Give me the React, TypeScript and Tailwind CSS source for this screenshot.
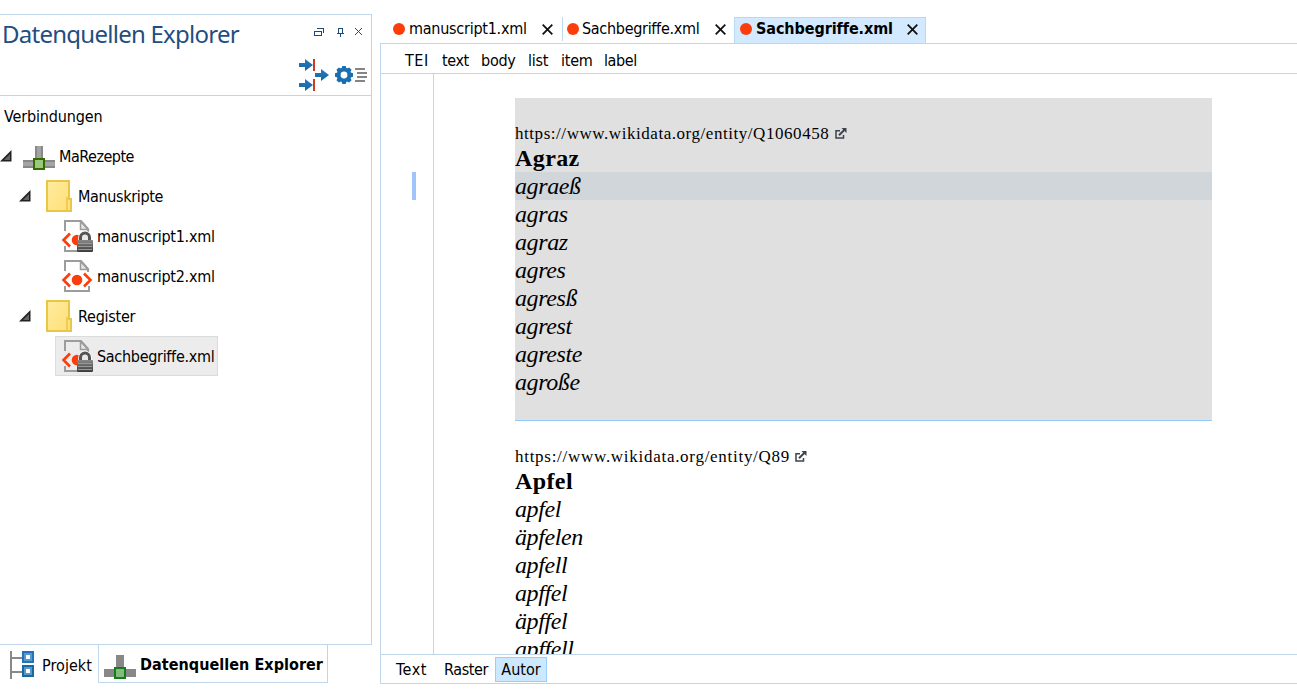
import type { ReactNode } from "react";

function Dot() {
  return <span className="block size-3 shrink-0 rounded-full bg-[#fb3d0c]" />;
}

function Close() {
  return (
    <svg className="block shrink-0" width="11" height="11" viewBox="0 0 11 11" fill="none" stroke="#111" strokeWidth="1.8">
      <path d="M.7.7l9.600 9.600M10.300.7L.7 10.300" />
    </svg>
  );
}

function Expanded() {
  return (
    <svg className="block shrink-0" width="12" height="12" viewBox="0 0 12 12">
      <path d="M11.500 0v11.500H0z" fill="#222" />
      <path d="M10 4v6H4z" fill="#666" />
    </svg>
  );
}

function Connection({ bright = false }: { bright?: boolean }) {
  return (
    <svg className="block shrink-0" width="32" height="24" viewBox="0 0 32 24" shapeRendering="crispEdges">
      <path d="M12 0h8v14h12v8H0v-8h12z" fill="#888" />
      {!bright && <path d="M14 0h4v14h-4zM0 16h32v4H0z" fill="#a4a4a4" />}
      <rect x="11" y="13" width="10" height="10" fill={bright ? "#83bd7e" : "#9cc77d"} stroke={bright ? "#177a1c" : "#336b00"} strokeWidth="2" />
    </svg>
  );
}

function Folder() {
  return (
    <svg className="block shrink-0" width="26" height="32" viewBox="0 0 26 32">
      <defs>
        <linearGradient id="folder" x1="0" y1="0" x2="1" y2="1">
          <stop stopColor="#ffeca0" />
          <stop offset="1" stopColor="#ffdf75" />
        </linearGradient>
      </defs>
      <path d="M1 1h22v18h2v12H1z" fill="url(#folder)" stroke="#e8c648" strokeWidth="2" />
      <path d="M23 18h-2v12" fill="none" stroke="#e8c648" strokeWidth="1.5" />
    </svg>
  );
}

function XmlFile({ locked = false }: { locked?: boolean }) {
  return (
    <svg className="block shrink-0" width="32" height="32" viewBox="0 0 32 32">
      <defs>
        <linearGradient id="lock" x1="0" y1="0" x2="0" y2="1">
          <stop stopColor="#888" />
          <stop offset="1" stopColor="#3c3c3c" />
        </linearGradient>
      </defs>
      <path d="M4 11V1h16l7 8v3M4 26v5h24v-5" fill="none" stroke="#9c9c9c" strokeWidth="2" />
      <path d="M19.500 1.500v8h7.500z" fill="#e6e6e6" stroke="#9c9c9c" strokeWidth="1.500" />
      <path d="M9 13.500L2.500 20 9 26.500" fill="none" stroke="#fb3d0c" strokeWidth="2.600" />
      <circle cx="16" cy="20" r="5.300" fill="#fb3d0c" />
      {locked ? (
        <g>
          <path d="M19.500 21v-3.500a4.500 4.500 0 0 1 9 0V21" fill="#e8e8e8" stroke="#fff" strokeWidth="4.500" />
          <path d="M19.500 21v-3.500a4.500 4.500 0 0 1 9 0V21" fill="#e8e8e8" stroke="#555" strokeWidth="3" />
          <rect x="16" y="20" width="16" height="12" rx="1" fill="url(#lock)" />
          <path d="M17 23.500h14M17 26.500h14M17 29.500h14" stroke="#999" strokeWidth="1" />
        </g>
      ) : (
        <path d="M23 13.500l6.500 6.500-6.500 6.500" fill="none" stroke="#fb3d0c" strokeWidth="2.600" />
      )}
    </svg>
  );
}

function Toolbar() {
  const teeth = [0, 45, 90, 135, 180, 225, 270, 315];
  return (
    <svg className="block shrink-0" width="70" height="34" viewBox="0 0 70 34">
      <defs>
        <linearGradient id="blue" x1="0" y1="0" x2="0" y2="1">
          <stop stopColor="#2876c8" />
          <stop offset="1" stopColor="#146a98" />
        </linearGradient>
      </defs>
      <g fill="url(#blue)">
        <path d="M0 5h6V1l8 6-8 6V9H0z" />
        <path d="M16 15h6v-4l8 6-8 6v-4h-6z" />
        <path d="M0 25h6v-4l8 6-8 6v-4H0z" />
      </g>
      <path d="M14 1h2v12h-2zM14 21h2v12h-2z" fill="#cf3a22" />
      <g fill="#1b6fb0">
        {teeth.map((a) => (
          <path key={a} d="M43.300 8h3.400l1.300 4h-6z" transform={`rotate(${a} 45 17)`} />
        ))}
      </g>
      <circle cx="45" cy="17" r="5.300" fill="none" stroke="#1b6fb0" strokeWidth="3.800" />
      <path d="M56 10h10v2H56zM58 14h10v2H58zM58 18h10v2H58zM56 22h10v2H56z" fill="#858585" shapeRendering="crispEdges" />
    </svg>
  );
}

function WindowButtons() {
  return (
    <svg className="block shrink-0" width="50" height="12" viewBox="0 0 50 12" fill="none" stroke="#1f4a78">
      <path d="M1.500 4.500h7v4h-7zM4 1.500h6.500v4" shapeRendering="crispEdges" />
      <path d="M25.500 6V1.500h4V6M24 6.500h7M27.500 7v3" shapeRendering="crispEdges" />
      <path d="M42 1l7 7M49 1l-7 7" />
    </svg>
  );
}

function ProjectIcon() {
  return (
    <svg className="block shrink-0" width="24" height="28" viewBox="0 0 24 28" shapeRendering="crispEdges">
      <path d="M0 0h2v28H0zM2 6h10v2H2zM2 20h10v2H2z" fill="#888" />
      <path d="M12 0h12v12H12z" fill="#2272bd" />
      <path d="M12 14h12v12H12z" fill="#176aa0" />
      <path d="M14 2h8v8h-8zM14 16h8v8h-8z" fill="#589bcb" />
      <path d="M16 4h4v4h-4zM16 18h4v4h-4z" fill="#fff" />
    </svg>
  );
}

function External() {
  return (
    <svg className="ml-[6px] mt-[2px] block shrink-0" width="12" height="11" viewBox="0 0 12 11" fill="none" stroke="#3d434c">
      <path d="M5 2.700H1v7.300h7.500V7" strokeWidth="1.500" />
      <path d="M4 7.200l5.500-5.500" strokeWidth="2" />
      <path d="M6.500 0H11.500v5z" fill="#3d434c" stroke="none" />
    </svg>
  );
}

function TreeRow({ indent, children }: { indent: string; children: ReactNode }) {
  return <div className={`flex h-10 items-center ${indent}`}>{children}</div>;
}

function Entry({ url, title, forms, active = false, urlWidth }: { url: string; title: string; forms: string[]; active?: boolean; urlWidth: string }) {
  return (
    <section className={active ? "h-[323px] border-b border-[#99c9f9] bg-[#e0e0e0] pt-[22px]" : "pt-[22px]"}>
      <div className="flex h-6 items-center whitespace-nowrap">
        <span className={`pt-[3px] text-[17px] ${urlWidth}`}>{url}</span>
        <External />
      </div>
      <h2 className="h-7 whitespace-nowrap text-[24px] font-bold leading-7 tracking-[0.4px]">{title}</h2>
      {forms.map((form, i) => (
        <div key={form} className={`h-7 whitespace-nowrap text-[24px] italic leading-7 tracking-[-0.4px] ${active && i === 0 ? "bg-[#d0d6da]" : ""}`}>
          {form}
        </div>
      ))}
    </section>
  );
}

export default function App() {
  return (
    <div className="flex h-[691px] w-[1297px] overflow-hidden bg-white font-['DejaVu_Sans_Condensed','DejaVu_Sans',sans-serif] text-[16px] leading-5 tracking-[-0.25px] text-black [font-stretch:condensed]">
      <aside className="flex w-[372px] shrink-0 flex-col pt-[14px]">
        <div className="flex h-[631px] flex-col border-y border-r border-[#c0d6eb]">
          <header className="flex h-[81px] shrink-0 flex-col border-b border-[#c0d6eb]">
            <div className="flex h-10 justify-between pl-[2px] pr-2">
              <h1 className="whitespace-nowrap font-['Noto_Sans',sans-serif] text-[24px] leading-[37px] tracking-[-0.74px] text-[#1f4e82]">Datenquellen Explorer</h1>
              <div className="pt-[12px]"><WindowButtons /></div>
            </div>
            <div className="flex justify-end pr-[2px] pt-[3px]"><Toolbar /></div>
          </header>
          <div className="flex h-10 items-center pl-1 pt-[2px] tracking-[-0.15px]">Verbindungen</div>
          <TreeRow indent="pl-0">
            <Expanded />
            <div className="ml-[11px] mt-1"><Connection /></div>
            <span className="ml-[4px] pt-[2px] tracking-[-0.5px]">MaRezepte</span>
          </TreeRow>
          <TreeRow indent="pl-[19px]">
            <Expanded />
            <div className="ml-[15px]"><Folder /></div>
            <span className="ml-[6px] pt-[2px] tracking-[-0.35px]">Manuskripte</span>
          </TreeRow>
          <TreeRow indent="pl-[61px]"><XmlFile locked /><span className="ml-1 pt-[2px]">manuscript1.xml</span></TreeRow>
          <TreeRow indent="pl-[61px]"><XmlFile /><span className="ml-1 pt-[2px]">manuscript2.xml</span></TreeRow>
          <TreeRow indent="pl-[19px]">
            <Expanded />
            <div className="ml-[15px]"><Folder /></div>
            <span className="ml-[6px] pt-[2px]">Register</span>
          </TreeRow>
          <div className="ml-[55px] flex h-10 w-[163px] items-center border border-[#dcdcdc] bg-[#ececec] pl-[5px]">
            <XmlFile locked />
            <span className="ml-1 whitespace-nowrap pt-[2px] tracking-[-0.3px]">Sachbegriffe.xml</span>
          </div>
        </div>
        <nav className="flex">
          <div className="flex h-10 w-[98px] items-center pl-[10px]">
            <ProjectIcon />
            <span className="ml-2 pt-[2px] tracking-[0.05px]">Projekt</span>
          </div>
          <div className="flex h-[38px] w-[230px] items-center border-x border-b border-[#c0d6eb] pl-[5px]">
            <div className="mt-[6px]"><Connection bright /></div>
            <span className="ml-1 mt-[3px] whitespace-nowrap font-bold tracking-[0.05px]">Datenquellen Explorer</span>
          </div>
        </nav>
      </aside>

      <main className="ml-2 flex min-w-0 flex-1 flex-col pt-[17px]">
        <div className="flex h-[26px] pl-[13px]">
          <div className="flex h-6 w-[169px] items-center">
            <Dot /><span className="ml-1 w-[133px]">manuscript1.xml</span><Close />
          </div>
          <div className="flex h-6 w-[172px] items-center border-l border-[#c0d6eb] pl-1">
            <Dot /><span className="ml-[3px] w-[133px] tracking-[-0.3px]">Sachbegriffe.xml</span><Close />
          </div>
          <div className="flex w-[192px] items-center border-x border-t border-[#b9d8f2] bg-[#d2e9ff] pb-[3px] pl-[5px]">
            <Dot /><span className="ml-1 w-[151px] font-bold tracking-[-0.08px]">Sachbegriffe.xml</span><Close />
          </div>
        </div>
        <div className="flex h-[641px] flex-col border-y border-l border-[#c0d6eb]">
          <nav className="flex h-[30px] shrink-0 items-center border-b border-[#c0d6eb] pl-6 pt-[4px]">
            <span className="w-[37px] tracking-[0.5px]">TEI</span>
            <span className="w-[39px] tracking-[-0.4px]">text</span>
            <span className="w-[47px]">body</span>
            <span className="w-[33px]">list</span>
            <span className="w-[43px]">item</span>
            <span className="tracking-[-0.4px]">label</span>
          </nav>
          <div className="flex h-[580px] shrink-0 overflow-hidden">
            <div className="w-[53px] shrink-0 border-r border-[#c0d6eb] pl-[31px] pt-[98px]">
              <div className="h-7 w-1 bg-[#9fc5fb]" />
            </div>
            <article className="ml-[81px] w-[697px] pt-6 font-['Liberation_Serif',serif] tracking-normal [font-stretch:normal]">
              <Entry active url="https://www.wikidata.org/entity/Q1060458" urlWidth="w-[314px] tracking-[0.55px]" title="Agraz" forms={["agraeß", "agras", "agraz", "agres", "agresß", "agrest", "agreste", "agroße"]} />
              <Entry url="https://www.wikidata.org/entity/Q89" urlWidth="w-[274px] tracking-[0.72px]" title="Apfel" forms={["apfel", "äpfelen", "apfell", "apffel", "äpffel", "apffell"]} />
            </article>
          </div>
          <nav className="flex h-[29px] shrink-0 items-center border-t border-[#c0d6eb] pl-[15px]">
            <span className="w-[48px] pt-[2px] tracking-[0.5px]">Text</span>
            <span className="w-[51px] pt-[2px] tracking-[-0.4px]">Raster</span>
            <span className="flex h-[25px] w-[52px] items-center justify-center border border-[#99cffc] bg-[#cce8ff] pt-[2px] tracking-[0px]">Autor</span>
          </nav>
        </div>
      </main>
    </div>
  );
}
